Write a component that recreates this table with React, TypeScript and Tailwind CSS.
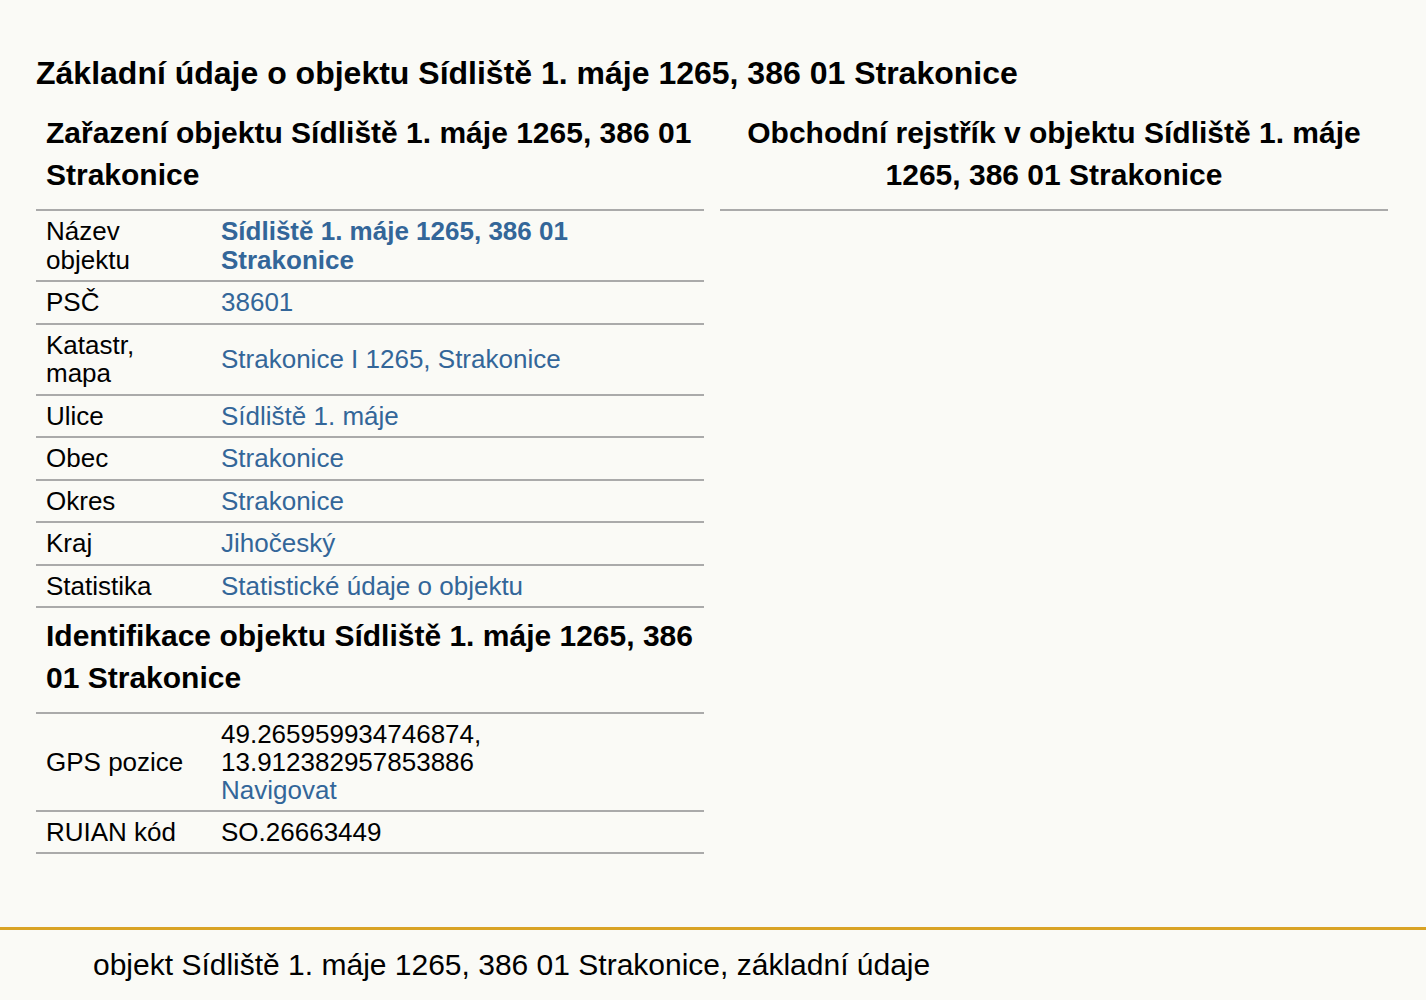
import type { ReactNode } from "react";

const ADDR = "Sídliště 1. máje 1265, 386 01 Strakonice";

function Row({ label, children }: { label: ReactNode; children: ReactNode }) {
  return (
    <tr className="border-b-2 border-[#aaaaaa]">
      <td className="w-[185px] py-[6px] pl-[10px] pr-2 align-middle">{label}</td>
      <td className="py-[6px] align-middle">{children}</td>
    </tr>
  );
}

function Link({ children, bold }: { children: ReactNode; bold?: boolean }) {
  return (
    <a href="#" className={bold ? "font-bold text-[#336699]" : "text-[#336699]"}>
      {children}
    </a>
  );
}

function SectionTitle({ children, center }: { children: ReactNode; center?: boolean }) {
  return (
    <h2
      className={
        "px-[10px] pt-[7px] pb-[13px] text-[30px] font-bold leading-[42px] border-b-2 border-[#aaaaaa]" +
        (center ? " text-center" : "")
      }
    >
      {children}
    </h2>
  );
}

export default function App() {
  return (
    <div className="min-h-[1000px] bg-[#fafaf6] text-black font-['Liberation_Sans',Arial,sans-serif]">
      <main className="px-[36px] pt-[55px] pb-[73px]">
        <h1 className="text-[32px] font-bold leading-[36px]">Základní údaje o objektu {ADDR}</h1>

        <div className="mt-[14px] grid grid-cols-[668px_668px] gap-x-[16px]">
          <section>
            <SectionTitle>
              Zařazení objektu Sídliště 1. máje 1265, 386 01
              <br />
              Strakonice
            </SectionTitle>
            <table className="w-full border-collapse text-[26px] leading-[28.5px]">
              <tbody>
                <Row label={<>Název<br />objektu</>}>
                  <Link bold>
                    Sídliště 1. máje 1265, 386 01
                    <br />
                    Strakonice
                  </Link>
                </Row>
                <Row label="PSČ">
                  <Link>38601</Link>
                </Row>
                <Row label={<>Katastr,<br />mapa</>}>
                  <Link>Strakonice I 1265, Strakonice</Link>
                </Row>
                <Row label="Ulice">
                  <Link>Sídliště 1. máje</Link>
                </Row>
                <Row label="Obec">
                  <Link>Strakonice</Link>
                </Row>
                <Row label="Okres">
                  <Link>Strakonice</Link>
                </Row>
                <Row label="Kraj">
                  <Link>Jihočeský</Link>
                </Row>
                <Row label="Statistika">
                  <Link>Statistické údaje o objektu</Link>
                </Row>
              </tbody>
            </table>

            <SectionTitle>
              Identifikace objektu Sídliště 1. máje 1265, 386
              <br />
              01 Strakonice
            </SectionTitle>
            <table className="w-full border-collapse text-[26px] leading-[28px]">
              <tbody>
                <Row label="GPS pozice">
                  49.265959934746874,
                  <br />
                  13.912382957853886
                  <br />
                  <Link>Navigovat</Link>
                </Row>
                <Row label="RUIAN kód">SO.26663449</Row>
              </tbody>
            </table>
          </section>

          <section>
            <SectionTitle center>
              Obchodní rejstřík v objektu Sídliště 1. máje
              <br />
              1265, 386 01 Strakonice
            </SectionTitle>
          </section>
        </div>
      </main>

      <footer className="border-t-[3px] border-[#d9a325] pl-[93px] pt-[18px] text-[30px] leading-[34px]">
        objekt {ADDR}, základní údaje
      </footer>
    </div>
  );
}
